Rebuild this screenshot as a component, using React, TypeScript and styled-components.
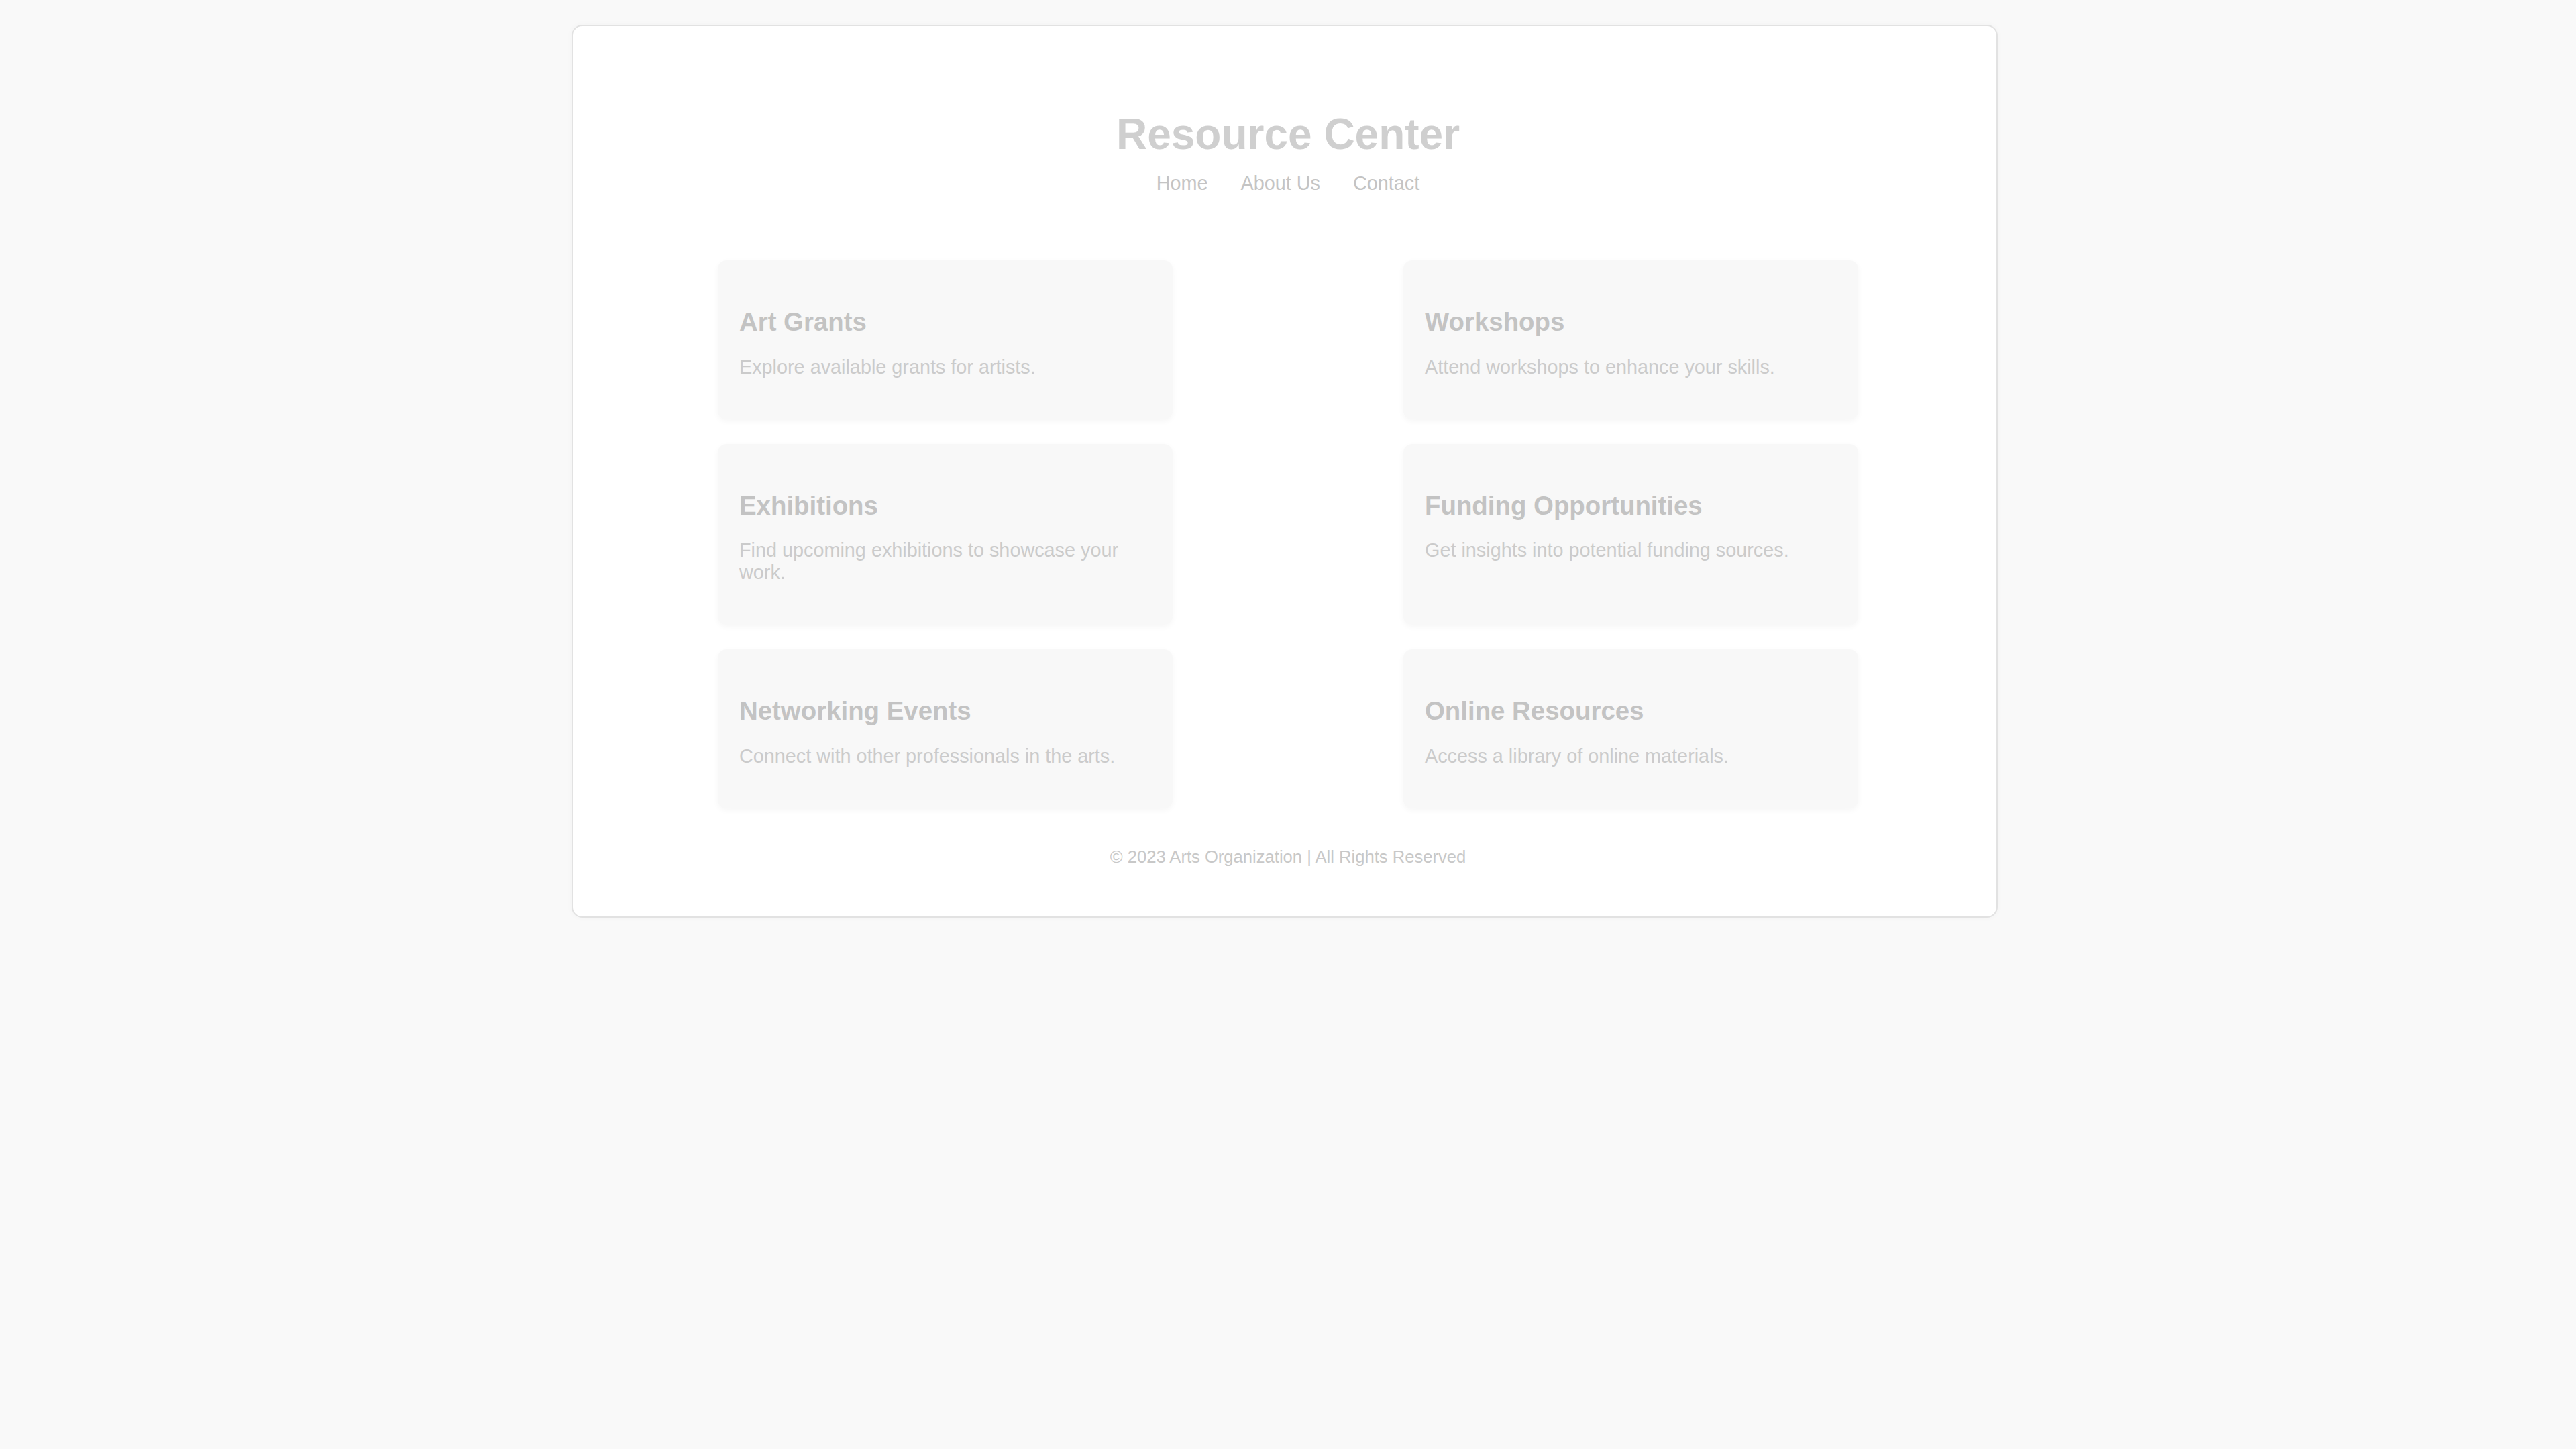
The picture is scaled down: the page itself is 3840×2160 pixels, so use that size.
import React from 'react';
import styled, { createGlobalStyle } from 'styled-components';

const GlobalStyle = createGlobalStyle`
  html, body {
    margin: 0;
    padding: 0;
    background: #f9f9f9;
    font-family: "Liberation Sans", Arial, sans-serif;
  }
`;

// right padding stands in for the scrollbar gutter of the original page
const Page = styled.div`
  padding: 37px 10px 60px 0;
  min-height: 2160px;
  box-sizing: border-box;
`;

const Container = styled.div`
  width: 2126px;
  margin: 0 auto;
  box-sizing: border-box;
  background: #ffffff;
  border: 2px solid #e2e2e2;
  border-radius: 16px;
  box-shadow: 0 0 10px rgba(0, 0, 0, 0.03);
  padding: 124px 206px 74px 216px;
`;

const Header = styled.header`
  display: flex;
  flex-direction: column;
  align-items: center;
  gap: 20px;
`;

const Title = styled.h1`
  margin: 0;
  font-size: 64px;
  font-weight: 700;
  color: #cfcfcf;
  line-height: 74px;
`;

const Nav = styled.nav`
  display: flex;
  gap: 49px;
`;

const NavLink = styled.a`
  font-size: 28.8px;
  line-height: 33px;
  color: #c4c4c4;
  text-decoration: none;
`;

const Grid = styled.main`
  display: grid;
  grid-template-columns: repeat(2, 678px);
  justify-content: space-between;
  row-gap: 37px;
  margin-top: 98px;
`;

const Card = styled.section`
  background: #f8f8f8;
  border-radius: 13px;
  box-shadow: 0 3px 10px rgba(0, 0, 0, 0.04);
  padding: 32px;
`;

const CardTitle = styled.h3`
  margin: 38px 0 0;
  font-size: 38.4px;
  line-height: 44px;
  font-weight: 700;
  color: #c3c3c3;
`;

const CardText = styled.p`
  margin: 28.8px 0;
  font-size: 28.8px;
  line-height: 33px;
  color: #cbcbcb;
`;

const Footer = styled.footer`
  margin-top: 57px;
  text-align: center;
  font-size: 25.6px;
  line-height: 30px;
  color: #c8c8c8;
`;

const resources = [
  { title: 'Art Grants', text: 'Explore available grants for artists.' },
  { title: 'Workshops', text: 'Attend workshops to enhance your skills.' },
  { title: 'Exhibitions', text: 'Find upcoming exhibitions to showcase your work.' },
  { title: 'Funding Opportunities', text: 'Get insights into potential funding sources.' },
  { title: 'Networking Events', text: 'Connect with other professionals in the arts.' },
  { title: 'Online Resources', text: 'Access a library of online materials.' },
];

export default function App() {
  return (
    <Page>
      <GlobalStyle />
      <Container>
        <Header>
          <Title>Resource Center</Title>
          <Nav>
            <NavLink href="#">Home</NavLink>
            <NavLink href="#">About Us</NavLink>
            <NavLink href="#">Contact</NavLink>
          </Nav>
        </Header>
        <Grid>
          {resources.map(r => (
            <Card key={r.title}>
              <CardTitle>{r.title}</CardTitle>
              <CardText>{r.text}</CardText>
            </Card>
          ))}
        </Grid>
        <Footer>© 2023 Arts Organization | All Rights Reserved</Footer>
      </Container>
    </Page>
  );
}
